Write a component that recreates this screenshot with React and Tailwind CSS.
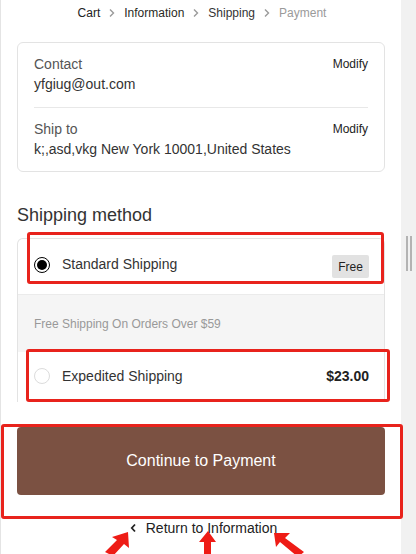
import React from 'react';

const Chevron = () => (
  <svg width="8" height="10" viewBox="0 0 8 10" className="mx-[8px]" fill="none">
    <path d="M2 1.5 L5.5 5 L2 8.5" stroke="#9a9a9a" strokeWidth="1.4" />
  </svg>
);

const RedBox = ({ className }) => (
  <div className={`pointer-events-none absolute rounded-[3px] border-[3px] border-[#e8231c] ${className}`} />
);

const App = () => {
  return (
    <div className="flex h-[554px] w-[416px] overflow-hidden bg-white font-['Liberation_Sans',Arial,sans-serif]">
      <div className="relative w-[401px] border-l border-[#e4e4e4]">
        {/* breadcrumb */}
        <div className="flex h-[26px] items-center justify-center pl-[2px] text-[12px]">
          <span className="text-[#222]">Cart</span>
          <Chevron />
          <span className="text-[#2a2a1e]">Information</span>
          <Chevron />
          <span className="text-[#333]">Shipping</span>
          <Chevron />
          <span className="text-[#9a9a9a]">Payment</span>
        </div>

        {/* contact card */}
        <div className="ml-[16px] mt-[16px] w-[368px] rounded-[6px] border border-[#e3e3e3] px-[16px]">
          <div className="border-b border-[#e8e8e8] pb-[13px] pt-[11px]">
            <div className="flex h-[20px] items-center justify-between">
              <span className="text-[14px] text-[#555]">Contact</span>
              <span className="text-[12px] text-[#222]">Modify</span>
            </div>
            <div className="flex h-[20px] items-center text-[14px] text-[#333]">yfgiug@out.com</div>
          </div>
          <div className="pb-[12px] pt-[11px]">
            <div className="flex h-[20px] items-center justify-between">
              <span className="text-[14px] text-[#555]">Ship to</span>
              <span className="text-[12px] text-[#222]">Modify</span>
            </div>
            <div className="flex h-[20px] items-center text-[14px] text-[#333]">
              k;,asd,vkg New York 10001,United States
            </div>
          </div>
        </div>

        {/* shipping method */}
        <h2 className="ml-[16px] mt-[31px] flex h-[24px] items-center text-[18px] font-normal text-[#333]">
          Shipping method
        </h2>

        <div className="relative ml-[16px] mt-[11px] w-[368px] rounded-t-[6px] border border-b-0 border-[#e3e3e3]">
          <div className="flex h-[55px] items-center justify-between pb-[4px] pl-[16px] pr-[15px]">
            <div className="flex items-center">
              <span className="flex h-[16px] w-[16px] items-center justify-center rounded-full border-[1.5px] border-black bg-white">
                <span className="h-[10px] w-[10px] rounded-full bg-black" />
              </span>
              <span className="ml-[12px] text-[14px] text-[#333]">Standard Shipping</span>
            </div>
            <span className="mt-[4px] flex h-[23px] w-[37px] items-center justify-center rounded-[2px] bg-[#e2e2e2] text-[12px] text-[#222]">
              Free
            </span>
          </div>
          <div className="flex h-[58px] items-center border-t border-[#ebebeb] bg-[#f5f5f5] pl-[16px] text-[12px] text-[#999]">
            Free Shipping On Orders Over $59
          </div>
          <div className="flex h-[50px] items-center justify-between pb-[2px] pl-[16px] pr-[15px]">
            <div className="flex items-center">
              <span className="h-[16px] w-[16px] rounded-full border border-[#dcdcdc] bg-white" />
              <span className="ml-[12px] text-[14px] text-[#333]">Expedited Shipping</span>
            </div>
            <span className="text-[14px] font-bold text-[#222]">$23.00</span>
          </div>
        </div>

        {/* continue */}
        <div className="ml-[16px] mt-[25px] flex h-[68px] w-[368px] items-center justify-center rounded-[4px] bg-[#7b5142] text-[16px] text-white">
          Continue to Payment
        </div>

        <div className="mt-[23px] flex h-[20px] items-center justify-center pl-[5px] text-[14px] text-[#222]">
          <svg width="7" height="10" viewBox="0 0 7 10" fill="none" className="mr-[9px]">
            <path d="M5 1.5 L1.8 5 L5 8.5" stroke="#222" strokeWidth="1.8" />
          </svg>
          <span>Return to Information</span>
        </div>

        {/* annotations */}
        <RedBox className="left-[26px] top-[232px] h-[52px] w-[357px]" />
        <RedBox className="left-[25px] top-[349px] h-[53px] w-[364px]" />
        <RedBox className="left-[0px] top-[424px] h-[95px] w-[402px]" />

        <svg className="pointer-events-none absolute left-0 top-[526px]" width="401" height="28" viewBox="0 0 401 28">
          <g fill="#ee1c16">
            <polygon points="127,6 128,22 123,18 112,30 104,26 116,14 111,11" />
            <polygon points="207,5 215,16 210,16 210,30 203,30 203,16 198,16" />
            <polygon points="273,7 289,7 284,12 303,26 297,31 279,16 275,21" />
          </g>
        </svg>
      </div>

      {/* scrollbar strip */}
      <div className="flex w-[15px] justify-center gap-[2px] bg-[#f1f1f1] pt-[236px]">
        <span className="h-[35px] w-[2px] bg-[#b3b3b3]" />
        <span className="h-[35px] w-[2px] bg-[#b3b3b3]" />
      </div>
    </div>
  );
};

export default App;
